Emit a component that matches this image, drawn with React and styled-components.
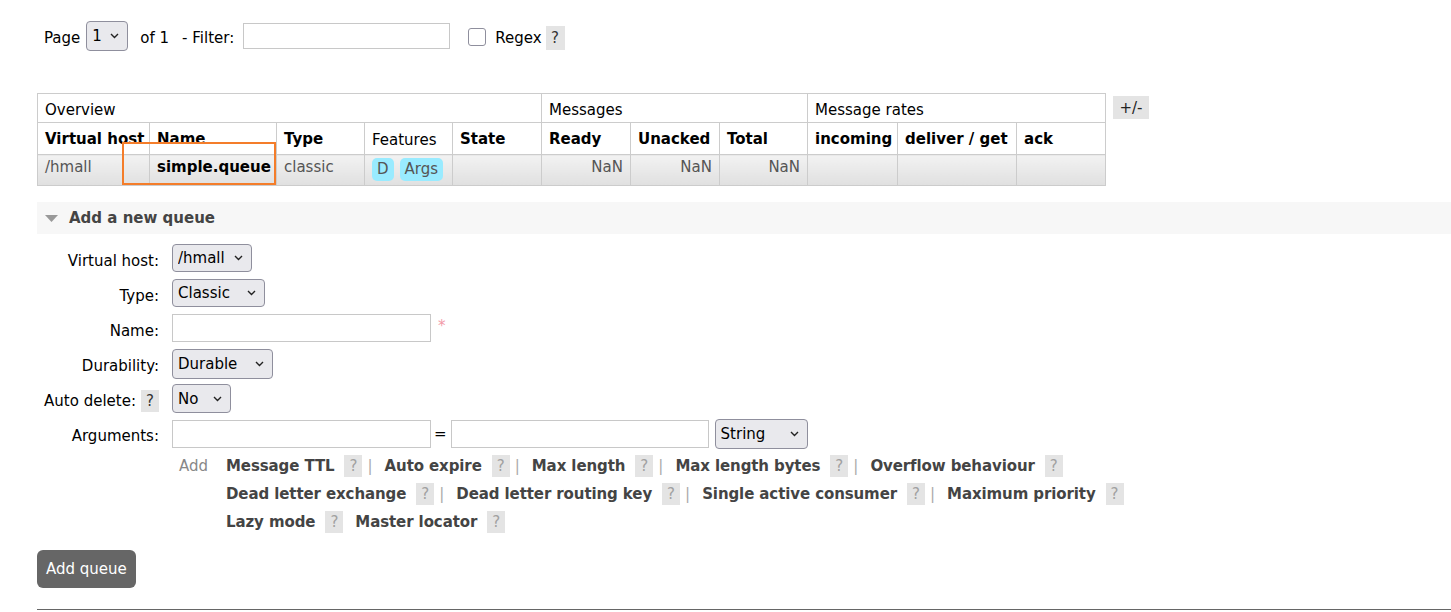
import React from 'react'
import styled, { createGlobalStyle } from 'styled-components'

const Global = createGlobalStyle`
  html, body {
    margin: 0;
    padding: 0;
    background: #fff;
  }
  body {
    font: 15px "DejaVu Sans", Verdana, sans-serif;
    color: #000;
  }
`

const Page = styled.div`
  padding-left: 37px;
  padding-top: 21px;
`

const Toolbar = styled.div`
  display: flex;
  align-items: center;
  padding-left: 7px;
  height: 30px;
`

const Label = styled.span`
  margin-right: ${({ gap }) => gap || 0}px;
  padding-top: 4px;
  white-space: nowrap;
`

const SelectWrap = styled.span`
  position: relative;
  display: inline-flex;
  margin-right: ${({ gap }) => gap || 0}px;

  select {
    appearance: none;
    -webkit-appearance: none;
    width: ${({ w }) => w}px;
    height: ${({ h }) => h || 28}px;
    box-sizing: border-box;
    padding: 0 22px 0 5px;
    background: #e9e9ed;
    border: 1px solid #8f8f9d;
    border-radius: 4px;
    font: 15px "DejaVu Sans", Verdana, sans-serif;
    color: #000;
  }

  svg {
    position: absolute;
    right: 9px;
    top: 50%;
    margin-top: -3px;
    pointer-events: none;
  }
`

const Chevron = () => (
  <svg width="9" height="6" viewBox="0 0 9 6">
    <path d="M1 1 L4.5 4.5 L8 1" fill="none" stroke="#222" strokeWidth="1.4" />
  </svg>
)

const Select = ({ w, h, gap, value }) => (
  <SelectWrap w={w} h={h} gap={gap}>
    <select defaultValue={value}>
      <option>{value}</option>
    </select>
    <Chevron />
  </SelectWrap>
)

const TextInput = styled.input`
  box-sizing: border-box;
  width: ${({ w }) => w}px;
  height: ${({ h }) => h || 28}px;
  border: 1px solid #c8c8c8;
  background: #fff;
  padding: 0 4px;
  font: 15px "DejaVu Sans", Verdana, sans-serif;
  margin-right: ${({ gap }) => gap || 0}px;
  outline: none;
`

const Check = styled.input`
  appearance: none;
  -webkit-appearance: none;
  width: 18px;
  height: 18px;
  margin: 1px 9px 0 0;
  border: 1px solid #8f8f9d;
  border-radius: 3px;
  background: #fff;
  box-sizing: border-box;
`

const Help = styled.span`
  display: inline-flex;
  align-items: center;
  justify-content: center;
  width: ${({ big }) => (big ? 19 : 18)}px;
  height: ${({ big }) => (big ? 24 : 22)}px;
  background: #e4e4e4;
  color: ${({ light }) => (light ? '#a0a0a0' : '#333')};
  font-size: 15px;
  margin-top: ${({ big }) => (big ? 4 : 0)}px;
  margin-left: ${({ ml }) => ml || 0}px;
  margin-right: ${({ mr }) => mr || 0}px;
`

const TableRow = styled.div`
  display: flex;
  align-items: flex-start;
  margin-top: 42px;
`

const TableBox = styled.div`
  position: relative;
`

const List = styled.table`
  border-collapse: collapse;
  table-layout: fixed;
  width: 1068px;

  th, td {
    border: 1px solid #cccccc;
    padding: 0 7px;
    text-align: left;
    white-space: nowrap;
    overflow: hidden;
  }

  thead tr:first-child th {
    height: 25px;
    padding-top: 3px;
    font-weight: normal;
  }

  thead tr:nth-child(2) th {
    height: 28px;
    font-weight: bold;
  }

  tbody td {
    height: 28px;
    vertical-align: top;
    padding-top: 2px;
    line-height: 20px;
    color: #555;
    background: linear-gradient(#f2f2f2, #e0e0e0);
  }
`

const PlainTh = styled.th`
  &&&& {
    font-weight: normal;
    padding-top: 3px;
  }
`

const Num = styled.td`
  &&&& {
    text-align: right;
  }
`

const Strong = styled.td`
  &&&& {
    font-weight: bold;
    color: #000;
  }
`

const Badge = styled.span`
  display: inline-block;
  height: 23px;
  line-height: 23px;
  padding: 0 5px;
  margin: 1px 6px 0 0;
  border-radius: 5px;
  background: #99ebff;
  color: #555;
`

const Marker = styled.div`
  position: absolute;
  left: 85px;
  top: 49px;
  width: 154px;
  height: 43px;
  box-sizing: border-box;
  border: 2px solid #f47d2a;
  pointer-events: none;
`

const Toggle = styled.span`
  display: inline-flex;
  align-items: center;
  justify-content: center;
  width: 36px;
  height: 23px;
  margin: 3px 0 0 7px;
  background: #e4e4e4;
  color: #222;
`

const SectionBar = styled.div`
  display: flex;
  align-items: center;
  height: 32px;
  margin-top: 16px;
  background: #f7f7f7;
  padding-left: 8px;
  color: #444;
  font-weight: bold;

  svg {
    margin-right: 11px;
  }
`

const Form = styled.div`
  display: grid;
  grid-template-columns: 122px auto;
  grid-auto-rows: 30px;
  column-gap: 13px;
  row-gap: 5.2px;
  margin-top: 9px;
`

const FormLabel = styled.div`
  display: flex;
  align-items: center;
  justify-content: flex-end;
  padding-top: 5px;
  white-space: nowrap;
`

const Field = styled.div`
  display: flex;
  align-items: center;
`

const Required = styled.span`
  color: #f29aa8;
  margin-left: 7px;
  font-size: 15px;
  position: relative;
  top: -2px;
`

const Eq = styled.span`
  margin: 0 4px 0 3px;
`

const AddBlock = styled.div`
  display: flex;
  margin: 3px 0 0 142px;
  line-height: 28px;
`

const AddWord = styled.span`
  color: #888;
  width: 47px;
`

const Links = styled.div`
  display: flex;
  flex-direction: column;
`

const LinkLine = styled.div`
  display: flex;
  align-items: center;
  height: 28px;
`

const ArgLink = styled.span`
  color: #444;
  font-weight: bold;
  letter-spacing: -0.1px;
  white-space: nowrap;
`

const Sep = styled.span`
  color: #aaa;
  margin: 0 12px 0 5px;
`

const Button = styled.button`
  margin-top: 14px;
  height: 38px;
  padding: 0 9px;
  border: none;
  border-radius: 6px;
  background: #666;
  color: #fff;
  font: 15px "DejaVu Sans", Verdana, sans-serif;
`

const Rule = styled.hr`
  border: none;
  border-top: 1px solid #666;
  margin: 21px 0 0;
`

const argLines = [
  ['Message TTL', 'Auto expire', 'Max length', 'Max length bytes', 'Overflow behaviour'],
  ['Dead letter exchange', 'Dead letter routing key', 'Single active consumer', 'Maximum priority'],
  ['Lazy mode', 'Master locator']
]

const colWidths = [112, 127, 88, 88, 89, 89, 89, 88, 90, 119, 89]

export default function App() {
  return (
    <>
      <Global />
      <Page>
        <Toolbar>
          <Label gap={6}>Page</Label>
          <Select w={42} h={30} gap={12} value="1" />
          <Label gap={13}>of 1</Label>
          <Label gap={9}>- Filter:</Label>
          <TextInput w={207} h={26} gap={18} />
          <Check type="checkbox" />
          <Label gap={4}>Regex</Label>
          <Help big>?</Help>
        </Toolbar>

        <TableRow>
          <TableBox>
            <List>
              <colgroup>
                {colWidths.map((w, i) => (
                  <col key={i} style={{ width: w }} />
                ))}
              </colgroup>
              <thead>
                <tr>
                  <th colSpan={5}>Overview</th>
                  <th colSpan={3}>Messages</th>
                  <th colSpan={3}>Message rates</th>
                </tr>
                <tr>
                  <th>Virtual host</th>
                  <th>Name</th>
                  <th>Type</th>
                  <PlainTh>Features</PlainTh>
                  <th>State</th>
                  <th>Ready</th>
                  <th>Unacked</th>
                  <th>Total</th>
                  <th>incoming</th>
                  <th>deliver / get</th>
                  <th>ack</th>
                </tr>
              </thead>
              <tbody>
                <tr>
                  <td>/hmall</td>
                  <Strong>simple.queue</Strong>
                  <td>classic</td>
                  <td>
                    <Badge>D</Badge>
                    <Badge>Args</Badge>
                  </td>
                  <td />
                  <Num>NaN</Num>
                  <Num>NaN</Num>
                  <Num>NaN</Num>
                  <td />
                  <td />
                  <td />
                </tr>
              </tbody>
            </List>
            <Marker />
          </TableBox>
          <Toggle>+/-</Toggle>
        </TableRow>

        <SectionBar>
          <svg width="13" height="7" viewBox="0 0 13 7">
            <polygon points="0,0 13,0 6.5,7" fill="#999" />
          </svg>
          Add a new queue
        </SectionBar>

        <Form>
          <FormLabel>Virtual host:</FormLabel>
          <Field>
            <Select w={80} value="/hmall" />
          </Field>

          <FormLabel>Type:</FormLabel>
          <Field>
            <Select w={93} value="Classic" />
          </Field>

          <FormLabel>Name:</FormLabel>
          <Field>
            <TextInput w={259} />
            <Required>*</Required>
          </Field>

          <FormLabel>Durability:</FormLabel>
          <Field>
            <Select w={101} h={30} value="Durable" />
          </Field>

          <FormLabel>
            Auto delete:
            <Help ml={5}>?</Help>
          </FormLabel>
          <Field>
            <Select w={59} h={29} value="No" />
          </Field>

          <FormLabel>Arguments:</FormLabel>
          <Field>
            <TextInput w={259} />
            <Eq>=</Eq>
            <TextInput w={258} gap={6} />
            <Select w={93} h={30} value="String" />
          </Field>
        </Form>

        <AddBlock>
          <AddWord>Add</AddWord>
          <Links>
            {argLines.map((line, li) => (
              <LinkLine key={li}>
                {line.map((name, i) => (
                  <React.Fragment key={name}>
                    <ArgLink>{name}</ArgLink>
                    <Help light ml={10} mr={li === 2 && i < line.length - 1 ? 12 : 0}>
                      ?
                    </Help>
                    {li < 2 && i < line.length - 1 && <Sep>|</Sep>}
                  </React.Fragment>
                ))}
              </LinkLine>
            ))}
          </Links>
        </AddBlock>

        <Button>Add queue</Button>
        <Rule />
      </Page>
    </>
  )
}
